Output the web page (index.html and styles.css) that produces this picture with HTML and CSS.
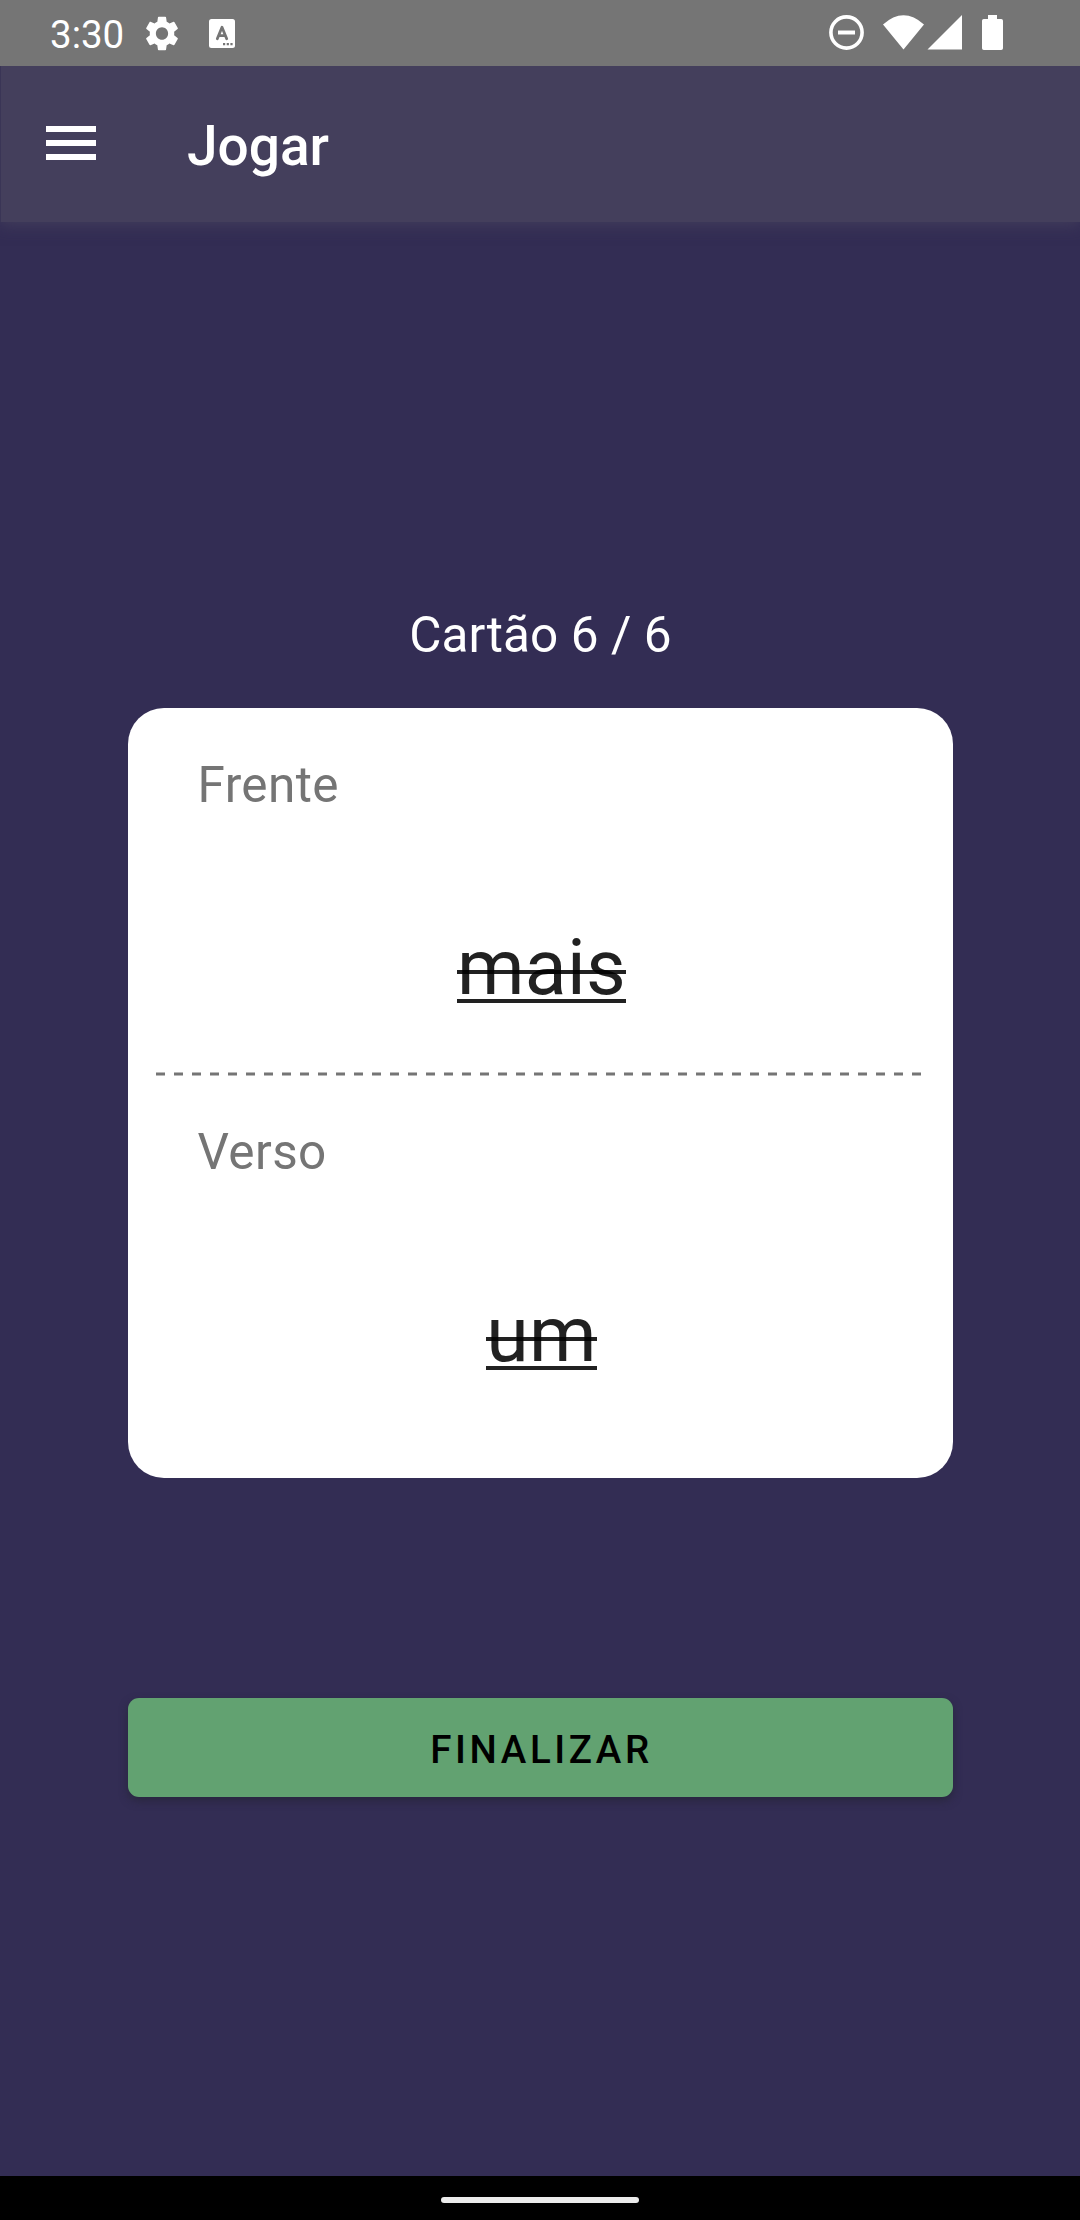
FILE: index.html
```html
<!DOCTYPE html>
<html lang="pt">
<head>
<meta charset="utf-8">
<title>Jogar</title>
<link rel="stylesheet" href="styles.css">
</head>
<body>
<div class="screen">
  <div class="status">
    <span class="clock">3:30</span>
    <svg class="gear" viewBox="2 2 20 20" preserveAspectRatio="none"><path fill="#fff" d="M19.14 12.94c.04-.3.06-.61.06-.94 0-.32-.02-.64-.07-.94l2.03-1.58a.49.49 0 0 0 .12-.61l-1.92-3.32a.488.488 0 0 0-.59-.22l-2.39.96c-.5-.38-1.03-.7-1.62-.94l-.36-2.54a.484.484 0 0 0-.48-.41h-3.84c-.24 0-.43.17-.47.41l-.36 2.54c-.59.24-1.13.57-1.62.94l-2.39-.96c-.22-.08-.47 0-.59.22L2.74 8.87c-.12.21-.08.47.12.61l2.03 1.58c-.05.3-.09.63-.09.94s.02.64.07.94l-2.03 1.58a.49.49 0 0 0-.12.61l1.92 3.32c.12.22.37.29.59.22l2.39-.96c.5.38 1.03.7 1.62.94l.36 2.54c.05.24.24.41.48.41h3.84c.24 0 .44-.17.47-.41l.36-2.54c.59-.24 1.13-.56 1.62-.94l2.39.96c.22.08.47 0 .59-.22l1.92-3.32c.12-.22.07-.47-.12-.61l-2.01-1.58zM12 15.6c-1.98 0-3.600-1.62-3.600-3.600s1.62-3.600 3.600-3.600 3.600 1.62 3.600 3.600-1.62 3.600-3.600 3.600z"/></svg>
    <svg class="keyboard" viewBox="0 0 26 29"><rect width="26" height="29" rx="2.5" fill="#fff"/><path d="M8.3 19.8 13 8.3l4.7 11.5M9.8 16.6h6.4" fill="none" stroke="#757575" stroke-width="2.8" stroke-linecap="round" stroke-linejoin="round"/><path d="M14 24h2.200v2.200H14zM17.700 24h2.200v2.200h-2.200zM21.400 24h2.200v2.200h-2.200z" fill="#757575"/></svg>
    <svg class="system" viewBox="0 0 176 38"><circle cx="17.5" cy="18.5" r="15.6" fill="none" stroke="#fff" stroke-width="3.6"/><path d="M9 16.5h17v4H9z" fill="#fff"/><path d="M54 10.5Q74.5-8 95 10.5L74.5 35.5zM98.5 35.5h34.5v-34.5zM159 1h9v4h4.2q1.8 0 1.8 1.8v27.4q0 1.8-1.8 1.8h-17.4q-1.8 0-1.8-1.8V6.8q0-1.8 1.8-1.8h4.2z" fill="#fff"/></svg>
  </div>
  <header class="appbar">
    <svg class="menu" viewBox="0 0 50 34"><path d="M0 0h50v6H0zM0 14h50v6H0zM0 28h50v6H0z" fill="#fff"/></svg>
    <h1 class="title">Jogar</h1>
  </header>
  <main class="content">
    <p class="counter">Cartão 6 / 6</p>
    <section class="card">
      <div class="face">
        <p class="label">Frente</p>
        <p class="line"><span class="word">mais</span></p>
      </div>
      <svg class="divider" viewBox="0 0 769 4"><path d="M0 2H766" stroke="#757575" stroke-width="3" stroke-dasharray="9 9"/></svg>
      <div class="face back">
        <p class="label">Verso</p>
        <p class="line"><span class="word">um</span></p>
      </div>
    </section>
    <button class="finish">FINALIZAR</button>
  </main>
  <div class="nav"><div class="handle"></div></div>
</div>
</body>
</html>
```
FILE: styles.css
```css
* { box-sizing: border-box; margin: 0; padding: 0; }
body { font-family: Roboto, sans-serif; background: #332d54; }
svg { display: block; flex: none; }
.screen { width: 1080px; height: 2220px; display: flex; flex-direction: column; background: #332d54; }

.status { position: relative; z-index: 1; height: 66px; flex: none; background: #757575; display: flex; align-items: flex-start; padding: 0 75px 0 50px; }
.clock { width: 95px; font-size: 38.5px; line-height: 46px; color: #fff; padding-top: 12px; }
.gear { width: 34px; height: 35px; margin-top: 16px; }
.keyboard { width: 26px; height: 29px; margin: 19px 0 0 30px; }
.system { width: 176px; height: 38px; margin: 14px 0 0 auto; }

.appbar { height: 156px; flex: none; display: flex; align-items: center; padding: 0 0 2px 45px; border-left: 1px solid #3a3556; background: #443f5c; box-shadow: 0 3px 14px rgba(68, 63, 92, .9); }
.menu { width: 50px; height: 34px; }
.title { margin: 5px 0 0 91px; font-size: 55px; line-height: 64px; font-weight: 500; color: #fff; }

.content { flex: 1; display: flex; flex-direction: column; padding: 378px 127px 0 128px; }
.counter { height: 108px; text-align: center; font-size: 49.5px; line-height: 70px; letter-spacing: .1px; color: #fff; }
.card { height: 770px; border-radius: 36px; background: #fff; padding: 0 28px; }
.face { height: 364px; padding-top: 48px; }
.back { padding-top: 47px; }
.label { padding-left: 41.500px; font-size: 49.5px; line-height: 58px; letter-spacing: .4px; color: #757575; }
.line { margin-top: 109px; padding-left: 2px; text-align: center; line-height: 90px; font-size: 77px; letter-spacing: .3px; color: rgba(0, 0, 0, .87); }
.word { position: relative; display: inline-block; }
.word::before, .word::after { content: ""; position: absolute; left: 0; right: 0; height: 4px; background: rgba(0, 0, 0, .87); }
.word::before { top: 47px; }
.word::after { top: 76px; }
.divider { width: 769px; height: 4px; }

.finish { margin-top: 220px; height: 99px; flex: none; border: 0; border-radius: 11px; background: #62a271; color: #000; font: 500 38.5px/45px Roboto, sans-serif; letter-spacing: 3.6px; padding: 4px 0 0 2px; box-shadow: 0 4px 8px rgba(36, 35, 50, .65); }

.nav { height: 44px; flex: none; background: #000; padding-top: 21px; }
.handle { width: 198px; height: 6px; margin: 0 auto; border-radius: 3px; background: #ebebeb; }
```
